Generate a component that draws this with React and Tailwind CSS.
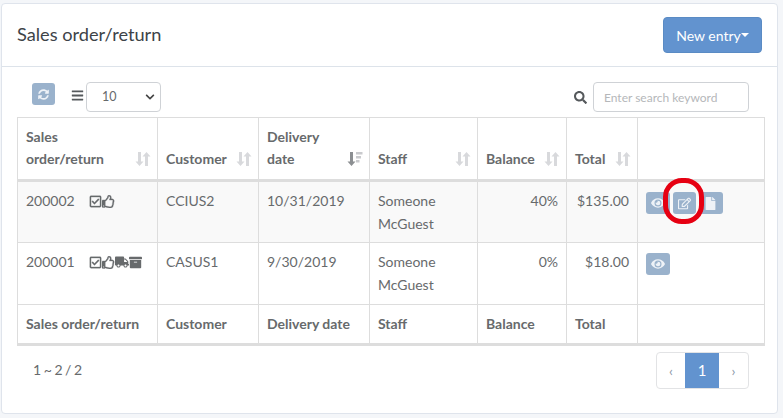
import {
  FaArchive,
  FaBars,
  FaChevronDown,
  FaEye,
  FaFile,
  FaRegCheckSquare,
  FaRegEdit,
  FaRegThumbsUp,
  FaSearch,
  FaSyncAlt,
  FaTruck,
} from "react-icons/fa";

function SortIcon({ active }) {
  return (
    <svg width="16" height="16" viewBox="0 0 16 16" className="shrink-0">
      <path
        d="M3 1h3v9.5h2.5L4.5 15 .5 10.5H3z"
        fill={active ? "#8c8f92" : "#d8d9dc"}
      />
      {active ? (
        <path d="M9 1h6.500v2.500H9zM9 5h5v2.500H9zM9 9h3.500v2.500H9z" fill="#c9cacd" />
      ) : (
        <path d="M10 15h3V5.500h2.500L11.500 1 7.500 5.500H10z" fill="#d8d9dc" />
      )}
    </svg>
  );
}

function HeadCell({ children, active }) {
  return (
    <th className="border border-[#dddddd] border-b-[3px] px-[8px] pb-[9px] pt-[7px] align-bottom text-left font-bold leading-[22px]">
      <div className="flex items-end justify-between">
        <span>{children}</span>
        <span className="-mr-[2px] pb-[3px]">
          <SortIcon active={active} />
        </span>
      </div>
    </th>
  );
}

function ActionButton({ children }) {
  return (
    <button className="flex h-[22px] w-[23.500px] items-center justify-center rounded-[3px] bg-[#9ab2cc] text-[#eef2f7]">
      {children}
    </button>
  );
}

const cell = "border border-[#dddddd] px-[8px] pb-[7px] pt-[8px] align-top leading-[22.500px]";
const footCell = "border border-[#dddddd] border-b-[3px] px-[8px] py-[8px] text-left font-bold leading-[22px]";
const statusIcon = "stroke-[12]";

export default function App() {
  return (
    <div className="h-[418px] w-[783px] overflow-hidden bg-[#f4f6f9] pl-[1px] pt-[3px] font-['Lato','Open_Sans',sans-serif] text-[14px] text-[#676a6c]">
      <div className="h-[411px] w-[777px] rounded-[4px] border border-[#dfe4ec] bg-white">
        <div className="flex h-[63px] items-center justify-between border-b border-[#dde3ea] pl-[15px] pr-[15px]">
          <h1 className="text-[18.200px] font-normal text-[#3d4348]">Sales order/return</h1>
          <button className="flex h-[36px] w-[99px] items-center justify-center rounded-[4px] border border-[#5a8bc4] bg-[#6293cf] text-[14px] text-white">
            New entry
            <span className="border-x-[4px] border-t-[4px] border-x-transparent border-t-white" />
          </button>
        </div>

        <div className="px-[15px] pt-[15px]">
          <div className="flex h-[35px] items-start justify-between pr-[13px]">
            <div className="flex items-start pl-[15px]">
              <button className="mt-[1px] flex h-[22px] w-[23px] items-center justify-center rounded-[3px] bg-[#9ab2cc] text-[#eef2f7]">
                <FaSyncAlt size={11} />
              </button>
              <FaBars size={13} className="ml-[16px] mr-[2px] mt-[7px] text-[#55595c]" />
              <div className="flex h-[30px] w-[75px] items-center justify-between rounded-[4px] border border-[#cfd2d6] bg-white pl-[15px] pr-[3px] text-[12.500px]">
                <span>10</span>
                <FaChevronDown size={10} className="mr-[2px] text-[#444]" />
              </div>
            </div>
            <div className="flex items-center">
              <FaSearch size={13} className="mr-[6px] text-[#55595c]" />
              <input
                placeholder="Enter search keyword"
                className="h-[30px] w-[156px] rounded-[4px] border border-[#cfd2d6] px-[10px] text-[12px] placeholder:text-[#b5b7ba]"
              />
            </div>
          </div>

          <table className="w-[747px] table-fixed border-collapse">
            <colgroup>
              <col className="w-[140px]" />
              <col className="w-[101px]" />
              <col className="w-[111px]" />
              <col className="w-[108px]" />
              <col className="w-[89px]" />
              <col className="w-[71px]" />
              <col className="w-[127px]" />
            </colgroup>
            <thead>
              <tr className="h-[63px]">
                <HeadCell>Sales<br />order/return</HeadCell>
                <HeadCell>Customer</HeadCell>
                <HeadCell active>Delivery<br />date</HeadCell>
                <HeadCell>Staff</HeadCell>
                <HeadCell>Balance</HeadCell>
                <HeadCell>Total</HeadCell>
                <th className="border border-[#dddddd] border-b-[3px]" />
              </tr>
            </thead>
            <tbody>
              <tr className="h-[62px] bg-[#f9f9f9]">
                <td className={cell}>
                  <div className="flex items-center">
                    <span className="w-[63px]">200002</span>
                    <FaRegCheckSquare size={13} className={statusIcon} />
                    <FaRegThumbsUp size={13} className={statusIcon} />
                  </div>
                </td>
                <td className={cell}>CCIUS2</td>
                <td className={cell}>10/31/2019</td>
                <td className={cell}>Someone McGuest</td>
                <td className={`${cell} text-right`}>40%</td>
                <td className={`${cell} text-right`}>$135.00</td>
                <td className="border border-[#dddddd] px-[8px] py-[10px] align-top">
                  <div className="relative flex gap-[3px]">
                    <ActionButton><FaEye size={14} /></ActionButton>
                    <ActionButton><FaRegEdit size={13} /></ActionButton>
                    <ActionButton><FaFile size={13} /></ActionButton>
                    <span className="absolute left-[17px] top-[-14px] h-[46px] w-[41px] rounded-[19px] border-[5px] border-[#e60012]" />
                  </div>
                </td>
              </tr>
              <tr className="h-[62px]">
                <td className={cell}>
                  <div className="flex items-center">
                    <span className="w-[63px]">200001</span>
                    <FaRegCheckSquare size={13} className={statusIcon} />
                    <FaRegThumbsUp size={13} className={statusIcon} />
                    <FaTruck size={14} />
                    <FaArchive size={13} />
                  </div>
                </td>
                <td className={cell}>CASUS1</td>
                <td className={cell}>9/30/2019</td>
                <td className={cell}>Someone McGuest</td>
                <td className={`${cell} text-right`}>0%</td>
                <td className={`${cell} text-right`}>$18.00</td>
                <td className="border border-[#dddddd] px-[8px] py-[10px] align-top">
                  <ActionButton><FaEye size={14} /></ActionButton>
                </td>
              </tr>
            </tbody>
            <tfoot>
              <tr className="h-[40px]">
                <th className={footCell}>Sales order/return</th>
                <th className={footCell}>Customer</th>
                <th className={footCell}>Delivery date</th>
                <th className={footCell}>Staff</th>
                <th className={footCell}>Balance</th>
                <th className={footCell}>Total</th>
                <th className={footCell} />
              </tr>
            </tfoot>
          </table>

          <div className="flex items-start justify-between pl-[16px] pr-[13px] pt-[6px]">
            <span className="pt-[7px] [word-spacing:-1px]">1 ~ 2 / 2</span>
            <div className="flex h-[37px] w-[93px] overflow-hidden rounded-[4px] border border-[#e2e3e5] text-[#8b97a8]">
              <span className="flex w-[28px] items-center justify-center text-[14px]">‹</span>
              <span className="flex w-[34px] items-center justify-center bg-[#6293cf] text-[15px] text-white">1</span>
              <span className="flex w-[29px] items-center justify-center text-[14px]">›</span>
            </div>
          </div>
        </div>
      </div>
    </div>
  );
}
